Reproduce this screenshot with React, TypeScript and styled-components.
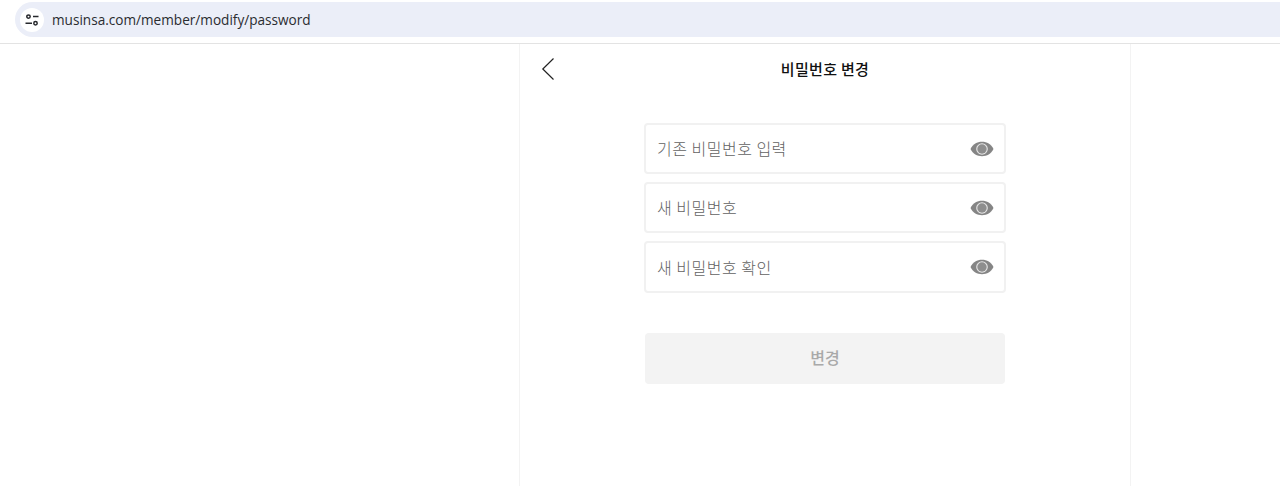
import React from "react";
import styled, { createGlobalStyle } from "styled-components";

const Global = createGlobalStyle`
  html, body { margin: 0; padding: 0; background: #fff; height: 100%; overflow: hidden; }
  #root { height: 100%; }
  * { box-sizing: border-box; }
`;

const Page = styled.div`
  width: 1280px;
  height: 486px;
  display: flex;
  flex-direction: column;
  font-family: "Noto Sans CJK KR", "Noto Sans", sans-serif;
`;

const BrowserBar = styled.div`
  height: 44px;
  flex: none;
  padding-top: 2px;
  background: #fff;
  border-bottom: 1px solid #e3e3e3;
`;

const AddressBar = styled.div`
  height: 35px;
  margin-left: 15px;
  padding-left: 5px;
  display: flex;
  align-items: center;
  gap: 8px;
  background: #ebeef8;
  border-radius: 18px 0 0 18px;
`;

const SiteIcon = styled.div`
  width: 24px;
  height: 24px;
  border-radius: 50%;
  background: #fff;
  display: flex;
  align-items: center;
  justify-content: center;
`;

const Url = styled.span`
  font-family: "Open Sans", Roboto, sans-serif;
  font-size: 13.6px;
  color: #2a2c30;
`;

const Column = styled.main`
  flex: 1;
  width: 612px;
  margin-left: 519px;
  border-left: 1px solid #f3f3f3;
  border-right: 1px solid #f3f3f3;
  display: flex;
  flex-direction: column;
  align-items: center;
`;

const Header = styled.header`
  position: relative;
  width: 100%;
  height: 50px;
  display: flex;
  align-items: center;
  justify-content: center;
`;

const Back = styled.button`
  position: absolute;
  left: 20px;
  top: 13px;
  width: 16px;
  height: 24px;
  padding: 0;
  border: 0;
  background: none;
  display: flex;
`;

const Title = styled.h1`
  margin: 0;
  font-size: 15px;
  font-weight: 500;
  letter-spacing: 0.33px;
  color: #111;
  line-height: 20px;
`;

const Form = styled.form`
  width: 362px;
  margin-top: 29px;
  display: flex;
  flex-direction: column;
  gap: 8px;
`;

const Field = styled.div<{ $tall?: boolean }>`
  height: ${(p) => (p.$tall ? 52 : 51)}px;
  padding: 0 10px 0 11px;
  border: 2px solid #f1f1f1;
  border-radius: 4px;
  background: #fff;
  display: flex;
  align-items: center;
  justify-content: space-between;
`;

const Placeholder = styled.span<{ $tall?: boolean }>`
  font-size: 16px;
  letter-spacing: 0.5px;
  color: #626262;
  font-weight: 300;
  margin-bottom: ${(p) => (p.$tall ? 0 : 2)}px;
`;

const Submit = styled.button`
  height: 51px;
  margin: 32px 1px 0;
  padding: 0 0 3px;
  border: 0;
  border-radius: 4px;
  background: #f3f3f3;
  color: #a9a9a9;
  font-family: inherit;
  font-size: 16px;
  font-weight: 500;
`;

const Eye = () => (
  <svg width="24" height="16" viewBox="0 0 24 16">
    <path d="M0.5 8C3 3.2 7 0.8 12 0.8S21 3.2 23.5 8C21 12.8 17 15.2 12 15.2S3 12.8 0.5 8Z" fill="#858585" />
    <circle cx="12" cy="8" r="5.8" fill="#e8e8e8" />
    <circle cx="12" cy="8" r="4.7" fill="#8e8e8e" />
  </svg>
);

const fields = ["기존 비밀번호 입력", "새 비밀번호", "새 비밀번호 확인"];

export default function App() {
  return (
    <Page>
      <Global />
      <BrowserBar>
        <AddressBar>
          <SiteIcon>
            <svg width="16" height="16" viewBox="0 0 16 16" fill="none" stroke="#26282c" strokeWidth="1.5">
              <circle cx="4.5" cy="4.6" r="1.7" />
              <path d="M9 4.6h5.5M1.5 11.2H8" />
              <circle cx="11.5" cy="11.2" r="1.7" />
            </svg>
          </SiteIcon>
          <Url>musinsa.com/member/modify/password</Url>
        </AddressBar>
      </BrowserBar>
      <Column>
        <Header>
          <Back aria-label="뒤로">
            <svg width="16" height="24" viewBox="0 0 16 24" fill="none" stroke="#222" strokeWidth="1.2">
              <path d="M13.5 1.5 2.8 12l10.7 10.5" />
            </svg>
          </Back>
          <Title>비밀번호 변경</Title>
        </Header>
        <Form>
          {fields.map((f, i) => (
            <Field key={f} $tall={i === 2}>
              <Placeholder $tall={i === 2}>{f}</Placeholder>
              <Eye />
            </Field>
          ))}
          <Submit type="button">변경</Submit>
        </Form>
      </Column>
    </Page>
  );
}
